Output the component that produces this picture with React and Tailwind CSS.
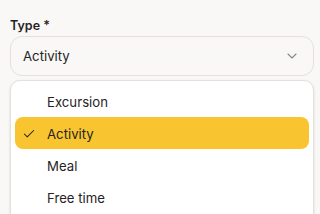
import React from "react";
import { ChevronDown, Check } from "lucide-react";

export default function App() {
  const items = ["Excursion", "Activity", "Meal", "Free time"];
  return (
    <div className="w-[320px] h-[214px] overflow-hidden bg-[#f9f8f6] font-['Inter',sans-serif] text-[#27231f]">
      <div className="pt-[17px] pl-[10px] w-[314px]">
        <div className="text-[12.5px] font-semibold leading-[18px] h-[19px]">Type *</div>
        <div className="h-[40px] rounded-[12px] border border-[#e6e0da] flex items-center justify-between pl-[12px] pr-[13px]">
          <span className="text-[13.2px] pt-[1px]">Activity</span>
          <ChevronDown size={16} strokeWidth={1.6} className="text-[#8a8680]" />
        </div>
        <div className="mt-[4px] bg-white rounded-[10px] border border-[#e6e0da] shadow-sm p-[4px] h-[160px]">
          {items.map((it) => {
            const sel = it === "Activity";
            return (
              <div
                key={it}
                className={
                  "h-[32px] flex items-center rounded-[8px] text-[13.2px] pt-[3px] " +
                  (sel ? "bg-[#f8c531]" : "")
                }
              >
                <div className="w-[32px] flex justify-start pl-[7px] -mt-[2px]">
                  {sel && <Check size={14} strokeWidth={1.8} />}
                </div>
                <span>{it}</span>
              </div>
            );
          })}
        </div>
      </div>
    </div>
  );
}
